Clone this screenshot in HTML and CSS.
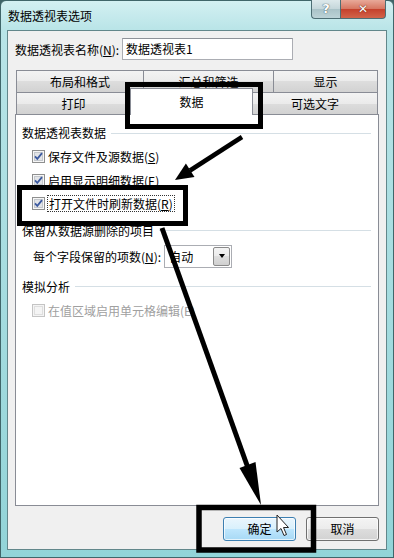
FILE: index.html
```html
<!DOCTYPE html>
<html lang="zh-CN">
<head>
    <meta charset="UTF-8">
    <title>数据透视表选项</title>
    <link rel="stylesheet" href="styles.css">
</head>
<body>
<div class="window">
  <div class="titlebar">
    <span class="title">数据透视表选项</span>
    <div class="caption-btns">
      <span class="cap-help">?</span>
      <span class="cap-close">✕</span>
    </div>
  </div>

  <div class="client">
    <div class="name-row">
      <span class="name-label">数据透视表名称(<u>N</u>):</span>
      <div class="textbox">数据透视表1</div>
    </div>

    <div class="tabs">
      <div class="tab-row">
        <div class="tab t-layout">布局和格式</div>
        <div class="tab t-sum">汇总和筛选</div>
        <div class="tab t-show">显示</div>
      </div>
      <div class="tab-row front">
        <div class="tab t-print">打印</div>
        <div class="tab t-data active">数据</div>
        <div class="tab t-alt">可选文字</div>
      </div>
    </div>

    <div class="panel">
      <div class="group-title">数据透视表数据</div>
      <div class="check-row">
        <svg class="cb" width="13" height="13" viewBox="0 0 13 13"><rect x="0.5" y="0.5" width="12" height="12" fill="#f6f6f6" stroke="#8e8f8f"/><rect x="2.5" y="2.5" width="8" height="8" fill="#e2e4e7" stroke="#c3c7cc"/><path d="M3 6.3 L5.3 8.8 L10 3.2" fill="none" stroke="#3c5aa0" stroke-width="1.8"/></svg>
        <span>保存文件及源数据(<u>S</u>)</span>
      </div>
      <div class="check-row">
        <svg class="cb" width="13" height="13" viewBox="0 0 13 13"><rect x="0.5" y="0.5" width="12" height="12" fill="#f6f6f6" stroke="#8e8f8f"/><rect x="2.5" y="2.5" width="8" height="8" fill="#e2e4e7" stroke="#c3c7cc"/><path d="M3 6.3 L5.3 8.8 L10 3.2" fill="none" stroke="#3c5aa0" stroke-width="1.8"/></svg>
        <span>启用显示明细数据(<u>E</u>)</span>
      </div>
      <div class="check-row">
        <svg class="cb" width="13" height="13" viewBox="0 0 13 13"><rect x="0.5" y="0.5" width="12" height="12" fill="#f6f6f6" stroke="#8e8f8f"/><rect x="2.5" y="2.5" width="8" height="8" fill="#e2e4e7" stroke="#c3c7cc"/><path d="M3 6.3 L5.3 8.8 L10 3.2" fill="none" stroke="#3c5aa0" stroke-width="1.8"/></svg>
        <span class="focus">打开文件时刷新数据(<u>R</u>)</span>
      </div>

      <div class="group-title g-keep">保留从数据源删除的项目</div>
      <div class="field-row">
        <span>每个字段保留的项数(<u>N</u>):</span>
        <div class="combo">
          <span class="combo-text">自动</span>
          <span class="combo-btn"><i class="tri"></i></span>
        </div>
      </div>

      <div class="group-title g-what">模拟分析</div>
      <div class="check-row disabled">
        <svg class="cb" width="13" height="13" viewBox="0 0 13 13"><rect x="0.5" y="0.5" width="12" height="12" fill="#f4f4f4" stroke="#c4c4c4"/><rect x="2.5" y="2.5" width="8" height="8" fill="#f4f4f4" stroke="#dedede"/></svg>
        <span>在值区域启用单元格编辑(E)</span>
      </div>
    </div>

    <div class="buttons">
      <div class="btn default">确定</div>
      <div class="btn">取消</div>
    </div>
  </div>

  <!-- annotations drawn over the dialog -->
  <svg class="marks" width="394" height="558" viewBox="0 0 394 558">
    <rect x="127.5" y="84.5" width="133" height="42" fill="none" stroke="#000" stroke-width="5"/>
    <rect x="19.5" y="187.5" width="166" height="36" fill="none" stroke="#000" stroke-width="5"/>
    <rect x="199" y="507.5" width="114.5" height="42.5" fill="none" stroke="#000" stroke-width="5.5"/>
    <line x1="242" y1="137" x2="190" y2="170.5" stroke="#000" stroke-width="4.5"/>
    <polygon points="175,180 194.5,177 185.9,163.6" fill="#000"/>
    <line x1="162" y1="228" x2="248" y2="468" stroke="#000" stroke-width="5"/>
    <polygon points="261,505 255.5,462 239.5,468" fill="#000"/>
    <path d="M277 515 L277 532 L281 528.5 L284 535.5 L286.5 534.5 L283.5 527.5 L288.5 527.5 Z" fill="#fff" stroke="#222" stroke-width="1"/>
  </svg>
</div>
</body>
</html>
```

FILE: styles.css
```css
body {
  margin: 0;
  background: #3f6468;
  font-family: "Noto Sans CJK SC", "Microsoft YaHei", sans-serif;
  font-size: 12px;
  color: #000;
}

.window {
  position: relative;
  width: 394px;
  height: 558px;
  box-sizing: border-box;
  border: 1px solid #40666a;
  border-radius: 6px 6px 0 0;
  padding: 0 6px 7px 6px;
  background: linear-gradient(#d3f0f2 0, #b8e4e7 30px, #92d4d8 100%);
  display: flex;
  flex-direction: column;
}

.titlebar {
  height: 29px;
  display: flex;
  justify-content: space-between;
  align-items: flex-start;
}

.title {
  margin-left: 1px;
  padding-top: 6px;
  line-height: 18px;
}

.caption-btns {
  display: flex;
  margin-right: 1px;
  margin-top: -1px;
}

.cap-help,
.cap-close {
  height: 19px;
  box-sizing: border-box;
  border: 1px solid #4d6e74;
  border-top: none;
  text-align: center;
  line-height: 18px;
  font-family: "DejaVu Sans", sans-serif;
  font-weight: bold;
  color: #fff;
}

.cap-help {
  width: 29px;
  border-radius: 0 0 0 4px;
  border-right: none;
  background: linear-gradient(#dde9eb, #c4d6da 50%, #a9c2c7 50%, #bcd3d7);
  font-size: 13px;
  text-shadow: 0 0 1px #40565c, 0 0 1px #40565c;
}

.cap-close {
  width: 46px;
  border-radius: 0 0 4px 0;
  background: linear-gradient(#e8a999, #d67560 50%, #c4402b 50%, #d2644a);
  font-size: 12px;
  text-shadow: 0 0 1px #6a1e12, 0 0 1px #6a1e12;
}

.client {
  flex: 1;
  border: 1px solid #62878b;
  background: #f0f0f0;
  padding: 7px 7px 8px 7px;
  display: flex;
  flex-direction: column;
}

.name-row {
  height: 22px;
  display: flex;
  align-items: center;
}

.name-label {
  width: 107px;
}

.textbox {
  width: 171px;
  height: 22px;
  box-sizing: border-box;
  border: 1px solid #abadb3;
  border-top-color: #8e9299;
  background: #fff;
  padding-left: 3px;
  line-height: 20px;
}

.tabs {
  margin-top: 10px;
}

.tab-row {
  display: flex;
  height: 22px;
  margin: 0 1px;
}

.tab {
  box-sizing: border-box;
  height: 22px;
  border: 1px solid #898c95;
  border-bottom: none;
  background: linear-gradient(#f3f3f3, #ebebeb 50%, #dddddd 50%, #d2d2d2);
  text-align: center;
  line-height: 21px;
}

.tab + .tab {
  margin-left: -1px;
}

.t-layout { width: 128px; }
.t-sum { width: 131px; }
.t-show { width: 105px; }
.t-print { width: 115px; }
.t-data { width: 123px; }
.t-alt { width: 126px; }

.tab.active {
  position: relative;
  z-index: 1;
  height: 27px;
  margin-top: -4px;
  background: #fff;
  line-height: 26px;
}

.panel {
  flex: 1;
  border: 1px solid #898c95;
  background: #fff;
  padding: 9px 7px 0 6px;
}

.group-title {
  display: flex;
  align-items: center;
  height: 18px;
  line-height: 18px;
}

.group-title::after {
  content: "";
  flex: 1;
  height: 1px;
  margin-left: 5px;
  background: #d5dfe5;
}

.g-keep {
  margin-top: 6px;
}

.g-what {
  margin-top: 10px;
}

.check-row {
  display: flex;
  align-items: center;
  height: 23.5px;
  padding-left: 10px;
}

.group-title + .check-row {
  margin-top: 3px;
}

.cb {
  flex: none;
  margin-right: 3px;
}

.focus {
  border: 1px dotted #333;
  padding: 0 1px;
  margin-left: -1px;
  line-height: 15px;
}

.disabled {
  color: #a0a0a0;
}

.field-row {
  display: flex;
  align-items: center;
  height: 23px;
  margin-top: 5px;
  padding-left: 11px;
}

.combo {
  display: flex;
  width: 68px;
  height: 23px;
  box-sizing: border-box;
  margin-left: 3px;
  border: 1px solid #abadb3;
  background: #fff;
}

.combo-text {
  flex: 1;
  padding-left: 4px;
  line-height: 21px;
}

.combo-btn {
  width: 17px;
  margin: 1px;
  box-sizing: border-box;
  border: 1px solid #8a8a8a;
  border-radius: 2px;
  background: linear-gradient(#f4f4f4, #ebebeb 50%, #dedede 50%, #d0d0d0);
  display: flex;
  align-items: center;
  justify-content: center;
}

.tri {
  width: 0;
  height: 0;
  border-left: 3.5px solid transparent;
  border-right: 3.5px solid transparent;
  border-top: 4px solid #000;
}

.buttons {
  display: flex;
  justify-content: flex-end;
  gap: 10px;
  margin-top: 11px;
}

.btn {
  width: 73px;
  height: 24px;
  box-sizing: border-box;
  border: 1px solid #707070;
  border-radius: 3px;
  background: linear-gradient(#f4f4f4, #ececec 50%, #dddddd 50%, #d2d2d2);
  box-shadow: inset 0 0 0 1px rgba(255, 255, 255, 0.7);
  text-align: center;
  line-height: 22px;
}

.btn.default {
  border-color: #3c7fb1;
  background: linear-gradient(#eaf6fd, #d9f0fc 50%, #bee6fd 50%, #a7d9f5);
}

.marks {
  position: absolute;
  left: -1px;
  top: -1px;
  pointer-events: none;
}
```
